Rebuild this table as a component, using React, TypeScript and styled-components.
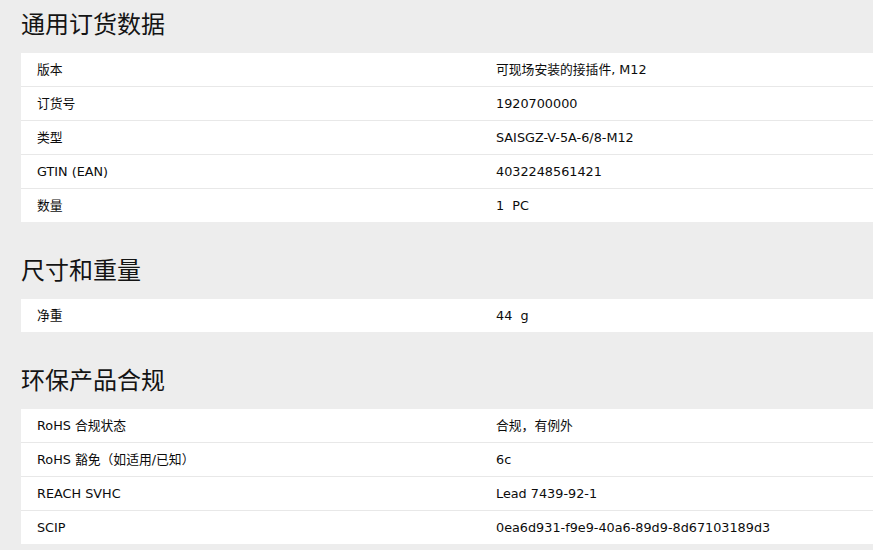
import React from 'react'
import styled, { createGlobalStyle } from 'styled-components'

const GlobalStyle = createGlobalStyle`
  html, body {
    margin: 0;
    padding: 0;
    background: #ededed;
  }
  body {
    font-family: 'DejaVu Sans', 'Noto Sans CJK SC', sans-serif;
    color: #111;
    overflow: hidden;
  }
`

const Page = styled.div`
  display: flex;
  flex-direction: column;
  gap: 24px;
  padding-left: 21px;
  box-sizing: border-box;
  width: 100%;
`

const Section = styled.section`
  display: flex;
  flex-direction: column;
`

const Heading = styled.h2`
  margin: 0 0 5px;
  height: 48px;
  line-height: 46px;
  font-family: 'Noto Sans CJK SC', sans-serif;
  font-size: 24px;
  font-weight: 400;
  color: #141414;
`

const Table = styled.div`
  background: #fff;
  display: flex;
  flex-direction: column;
`

const Row = styled.div`
  display: grid;
  grid-template-columns: 459px 1fr;
  align-items: center;
  height: 33px;
  border-bottom: 1px solid #e8e8e8;
  &:last-child {
    border-bottom: none;
  }
`

const Cell = styled.div<{ $pre?: boolean }>`
  padding-left: 16px;
  font-size: 12.8px;
  line-height: 16px;
  color: #0c0c0c;
  white-space: ${(p) => (p.$pre ? 'pre' : 'nowrap')};
`

interface Spec {
  label: string
  value: string
}

const sections: { title: string; rows: Spec[] }[] = [
  {
    title: '通用订货数据',
    rows: [
      { label: '版本', value: '可现场安装的接插件, M12' },
      { label: '订货号', value: '1920700000' },
      { label: '类型', value: 'SAISGZ-V-5A-6/8-M12' },
      { label: 'GTIN (EAN)', value: '4032248561421' },
      { label: '数量', value: '1  PC' },
    ],
  },
  {
    title: '尺寸和重量',
    rows: [{ label: '净重', value: '44  g' }],
  },
  {
    title: '环保产品合规',
    rows: [
      { label: 'RoHS 合规状态', value: '合规，有例外' },
      { label: 'RoHS 豁免（如适用/已知）', value: '6c' },
      { label: 'REACH SVHC', value: 'Lead 7439-92-1' },
      { label: 'SCIP', value: '0ea6d931-f9e9-40a6-89d9-8d67103189d3' },
    ],
  },
]

const App: React.FC = () => {
  return (
    <>
      <GlobalStyle />
      <Page>
        {sections.map((s) => (
          <Section key={s.title}>
            <Heading>{s.title}</Heading>
            <Table>
              {s.rows.map((r) => (
                <Row key={r.label}>
                  <Cell>{r.label}</Cell>
                  <Cell $pre>{r.value}</Cell>
                </Row>
              ))}
            </Table>
          </Section>
        ))}
      </Page>
    </>
  )
}
export default App
